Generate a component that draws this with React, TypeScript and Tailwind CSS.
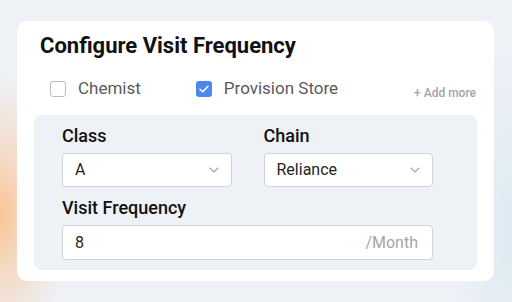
import { useState } from "react";

function Checkbox({ checked }: { checked: boolean }) {
  return checked ? (
    <span className="flex h-4 w-4 items-center justify-center rounded-[3px] bg-[#4a88ee]">
      <svg width="10" height="8" viewBox="0 0 10 8" fill="none">
        <path d="M1 4.2 3.7 6.8 9 1.2" stroke="white" strokeWidth="1.5" strokeLinecap="round" strokeLinejoin="round" />
      </svg>
    </span>
  ) : (
    <span className="h-4 w-4 rounded-[3px] border border-[#b9bcc2] bg-white" />
  );
}

function Chevron() {
  return (
    <svg width="10" height="6" viewBox="0 0 10 6" fill="none">
      <path d="M1 1l4 4 4-4" stroke="#a3a7ae" strokeWidth="1.1" strokeLinecap="round" strokeLinejoin="round" />
    </svg>
  );
}

function Select({ value }: { value: string }) {
  return (
    <div className="flex h-[34px] items-center justify-between rounded-[4px] border border-[#cfd2d7] bg-white pl-3 pr-3 text-[16px] text-[#1f1f1f]">
      <span>{value}</span>
      <Chevron />
    </div>
  );
}

export default function App() {
  const [types] = useState([
    { label: "Chemist", checked: false },
    { label: "Provision Store", checked: true },
  ]);

  return (
    <div
      className="h-[302px] w-[512px] bg-[#eef1f6] bg-[radial-gradient(ellipse_70px_140px_at_0px_215px,#fac495_0%,rgba(250,196,149,0.5)_40%,rgba(250,196,149,0)_100%),radial-gradient(ellipse_60px_180px_at_512px_230px,#dceaf2_0%,rgba(220,234,242,0)_100%)] pt-[21px] pl-[17px]"
      style={{ fontFamily: "Roboto, 'Liberation Sans', sans-serif" }}
    >
      <div className="flex h-[260px] w-[477px] flex-col rounded-[10px] bg-white px-[17px]">
        <h1 className="mt-[10px] pl-[6px] text-[22px] font-bold leading-[30px] text-[#111]">
          Configure Visit Frequency
        </h1>

        <div className="mt-[15px] flex items-center pl-[16px] pr-[1px]">
          {types.map((t) => (
            <label key={t.label} className="mr-[55px] flex items-center gap-[12px] text-[17px] text-[#5a5a5a]">
              <Checkbox checked={t.checked} />
              {t.label}
            </label>
          ))}
          <span className="mt-[8px] ml-auto text-[12px] font-medium text-[#a2a5aa]">+ Add more</span>
        </div>

        <div className="mt-[13px] rounded-[8px] bg-[#eef1f6] pt-[9px] pb-[10px] pl-[28px] pr-[44px]">
          <div className="grid grid-cols-2 gap-x-[32px]">
            <div>
              <div className="mb-[5px] text-[18px] font-medium leading-6 text-[#111]">Class</div>
              <Select value="A" />
            </div>
            <div>
              <div className="mb-[5px] text-[18px] font-medium leading-6 text-[#111]">Chain</div>
              <Select value="Reliance" />
            </div>
          </div>
          <div className="mt-[9px] mb-[5px] text-[18px] font-medium leading-6 text-[#111]">Visit Frequency</div>
          <div className="flex h-[35px] items-center justify-between rounded-[4px] border border-[#cfd2d7] bg-white pl-3 pr-[14px] text-[16px]">
            <span className="text-[#1f1f1f]">8</span>
            <span className="text-[#a3a6ab]">/Month</span>
          </div>
        </div>
      </div>
    </div>
  );
}
